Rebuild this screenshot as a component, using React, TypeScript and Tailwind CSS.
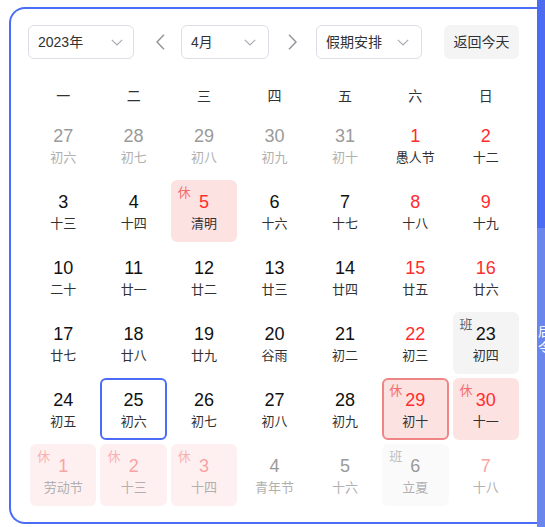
import React from 'react';

type Kind = 'prev' | 'cur' | 'next';

type Day = {
  day: number;
  lunar: string;
  kind: Kind;
  red?: boolean;
  badge?: '休' | '班';
  selected?: boolean;
  focus?: boolean;
};

const days: Day[] = [
  { day: 27, lunar: '初六', kind: 'prev' },
  { day: 28, lunar: '初七', kind: 'prev' },
  { day: 29, lunar: '初八', kind: 'prev' },
  { day: 30, lunar: '初九', kind: 'prev' },
  { day: 31, lunar: '初十', kind: 'prev' },
  { day: 1, lunar: '愚人节', kind: 'cur', red: true },
  { day: 2, lunar: '十二', kind: 'cur', red: true },

  { day: 3, lunar: '十三', kind: 'cur' },
  { day: 4, lunar: '十四', kind: 'cur' },
  { day: 5, lunar: '清明', kind: 'cur', red: true, badge: '休' },
  { day: 6, lunar: '十六', kind: 'cur' },
  { day: 7, lunar: '十七', kind: 'cur' },
  { day: 8, lunar: '十八', kind: 'cur', red: true },
  { day: 9, lunar: '十九', kind: 'cur', red: true },

  { day: 10, lunar: '二十', kind: 'cur' },
  { day: 11, lunar: '廿一', kind: 'cur' },
  { day: 12, lunar: '廿二', kind: 'cur' },
  { day: 13, lunar: '廿三', kind: 'cur' },
  { day: 14, lunar: '廿四', kind: 'cur' },
  { day: 15, lunar: '廿五', kind: 'cur', red: true },
  { day: 16, lunar: '廿六', kind: 'cur', red: true },

  { day: 17, lunar: '廿七', kind: 'cur' },
  { day: 18, lunar: '廿八', kind: 'cur' },
  { day: 19, lunar: '廿九', kind: 'cur' },
  { day: 20, lunar: '谷雨', kind: 'cur' },
  { day: 21, lunar: '初二', kind: 'cur' },
  { day: 22, lunar: '初三', kind: 'cur', red: true },
  { day: 23, lunar: '初四', kind: 'cur', badge: '班' },

  { day: 24, lunar: '初五', kind: 'cur' },
  { day: 25, lunar: '初六', kind: 'cur', focus: true },
  { day: 26, lunar: '初七', kind: 'cur' },
  { day: 27, lunar: '初八', kind: 'cur' },
  { day: 28, lunar: '初九', kind: 'cur' },
  { day: 29, lunar: '初十', kind: 'cur', red: true, badge: '休', selected: true },
  { day: 30, lunar: '十一', kind: 'cur', red: true, badge: '休' },

  { day: 1, lunar: '劳动节', kind: 'next', red: true, badge: '休' },
  { day: 2, lunar: '十三', kind: 'next', red: true, badge: '休' },
  { day: 3, lunar: '十四', kind: 'next', red: true, badge: '休' },
  { day: 4, lunar: '青年节', kind: 'next' },
  { day: 5, lunar: '十六', kind: 'next' },
  { day: 6, lunar: '立夏', kind: 'next', badge: '班' },
  { day: 7, lunar: '十八', kind: 'next', red: true },
];

const weekdays = ['一', '二', '三', '四', '五', '六', '日'];

const CaretDown = () => (
  <svg width="12" height="7" viewBox="0 0 12 7" fill="none" className="text-[#a8abb2]">
    <path d="M0.8 0.8 6 6 11.2 0.8" stroke="currentColor" strokeWidth="1.2" />
  </svg>
);

const Arrow: React.FC<{ dir: 'left' | 'right' }> = ({ dir }) => (
  <svg width="9" height="16" viewBox="0 0 9 16" fill="none" className="text-[#909399]">
    <path
      d={dir === 'left' ? 'M8 0.8 1 8 8 15.2' : 'M1 0.8 8 8 1 15.2'}
      stroke="currentColor"
      strokeWidth="1.4"
    />
  </svg>
);

const Select: React.FC<{ label: string; width: string; pr: string }> = ({ label, width, pr }) => (
  <div
    className={`${width} ${pr} h-[34px] border border-[#dcdfe6] rounded-[6px] pl-[9px] flex items-center justify-between text-[14px] text-[#303133]`}
  >
    <span>{label}</span>
    <CaretDown />
  </div>
);

const DayCell: React.FC<{ d: Day }> = ({ d }) => {
  const next = d.kind === 'next';
  const prev = d.kind === 'prev';

  let bg = '';
  if (d.badge === '休') bg = next ? 'bg-[#fef0f0]' : 'bg-[#fde2e2]';
  if (d.badge === '班') bg = next ? 'bg-[#fafafa]' : 'bg-[#f4f4f5]';

  let border = 'border-2 border-transparent';
  if (d.focus) border = 'border-2 border-[#4a6cf7]';
  if (d.selected) border = 'border-2 border-[#f08585]';

  let numColor = 'text-[#111111]';
  if (d.red) numColor = next ? 'text-[#f9a3a3]' : 'text-[#ff2d2d]';
  else if (prev || next) numColor = 'text-[#9a9a9a]';

  const lunarColor = prev || next ? 'text-[#b0b0b0]' : 'text-[#303133]';

  let badgeColor = 'text-[#f56c6c]';
  if (d.badge === '班') badgeColor = next ? 'text-[#c0c0c0]' : 'text-[#606266]';
  else if (next) badgeColor = 'text-[#f9b0b0]';

  return (
    <div className={`relative h-[62px] rounded-[6px] ${bg} ${border} flex flex-col items-center justify-center`}>
      {d.badge && (
        <span className={`absolute top-[3px] left-[5px] text-[13px] leading-[16px] ${badgeColor}`}>{d.badge}</span>
      )}
      <span className={`text-[18px] leading-[26px] font-['Liberation_Sans',Arial,sans-serif] ${numColor}`}>
        {d.day}
      </span>
      <span className={`text-[13px] leading-[18px] ${lunarColor}`}>{d.lunar}</span>
    </div>
  );
};

const App: React.FC = () => {
  return (
    <div className="w-[545px] h-[527px] bg-white flex overflow-hidden font-['Liberation_Sans','Noto_Sans_CJK_SC',sans-serif]">
      <div className="flex-1 pt-[7px] pl-[9px]">
        <div className="h-[517px] border-2 border-r-0 border-[#4a6cf7] rounded-l-[16px] pt-[16px] pl-[17px] pr-[18px]">
          {/* Toolbar */}
          <div className="flex items-center h-[34px]">
            <Select label="2023年" width="w-[106px]" pr="pr-[10px]" />
            <div className="w-[47px] flex justify-center pl-[5px]">
              <Arrow dir="left" />
            </div>
            <Select label="4月" width="w-[88px]" pr="pr-[12px]" />
            <div className="w-[47px] flex justify-center">
              <Arrow dir="right" />
            </div>
            <Select label="假期安排" width="w-[106px]" pr="pr-[12px]" />
            <button className="ml-auto w-[75px] h-[34px] rounded-[6px] bg-[#f4f4f5] text-[14px] text-[#303133]">
              返回今天
            </button>
          </div>

          {/* Weekdays */}
          <div className="ml-[2px] mt-[21px] h-[32px] grid grid-cols-7 gap-x-[4px] items-center text-[14px] text-[#303133]">
            {weekdays.map((w) => (
              <div key={w} className="text-center">
                {w}
              </div>
            ))}
          </div>

          {/* Days */}
          <div className="ml-[2px] mt-[2px] grid grid-cols-7 gap-[4px]">
            {days.map((d, i) => (
              <DayCell key={i} d={d} />
            ))}
          </div>
        </div>
      </div>

      {/* Right edge of neighbouring panel */}
      <div className="w-[8px] h-full flex flex-col overflow-hidden">
        <div className="h-[228px] bg-[#4b6bf3]" />
        <div className="flex-1 bg-[#6b85ef] pt-[96px] text-[13px] leading-[16px] text-white whitespace-nowrap pl-[1px]">
          <div>后</div>
          <div>令</div>
        </div>
      </div>
    </div>
  );
};

export default App;
